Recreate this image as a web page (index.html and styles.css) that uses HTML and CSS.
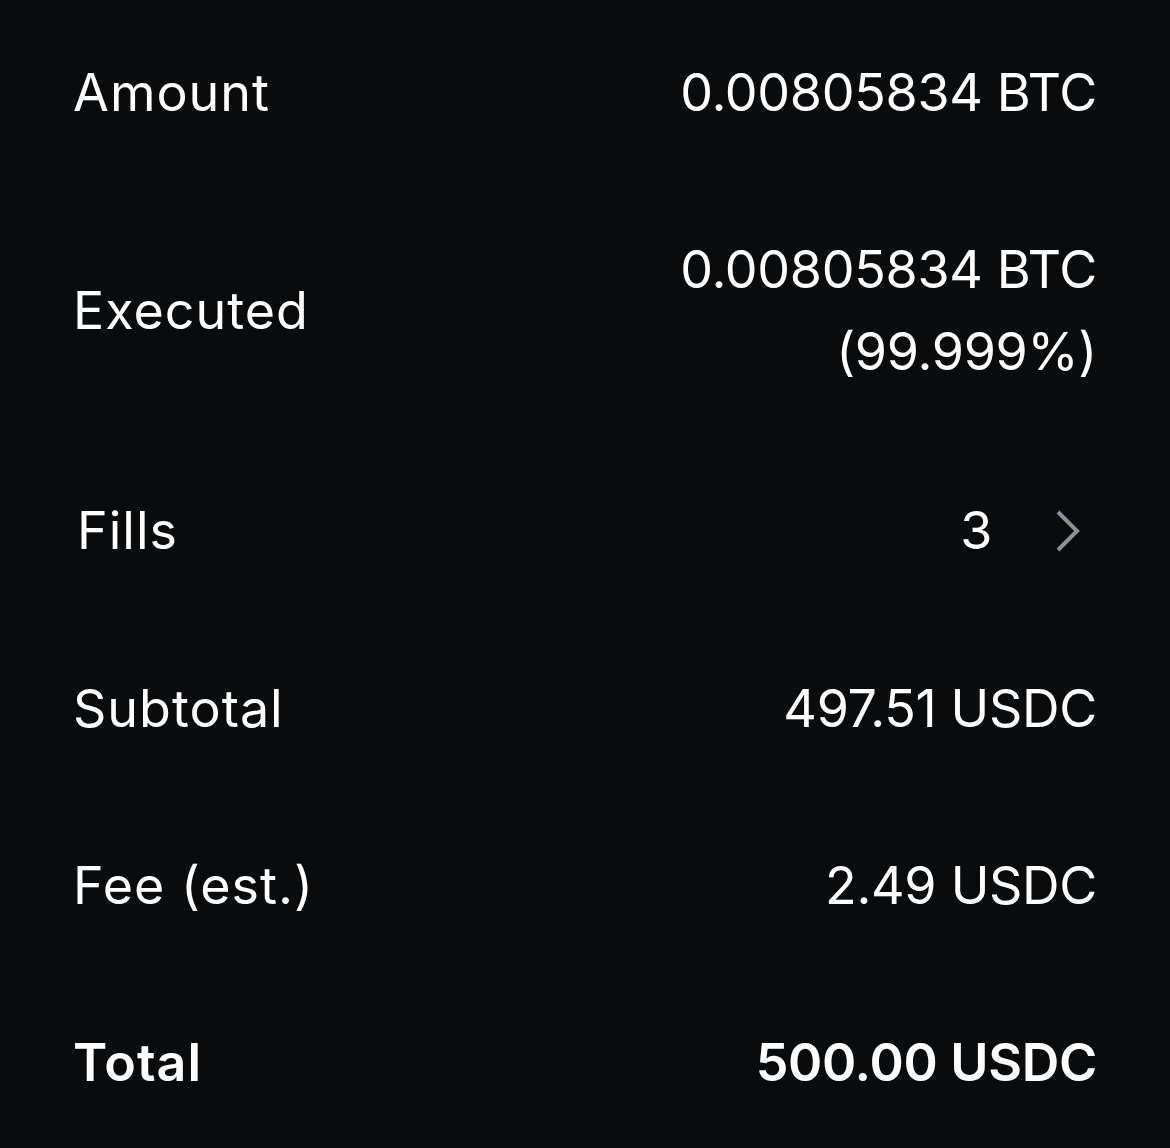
FILE: index.html
```html
<!DOCTYPE html>
<html lang="en">
<head>
  <meta charset="UTF-8" />
  <meta name="viewport" content="width=device-width, initial-scale=1" />
  <title>Order details</title>
  <link rel="stylesheet" href="styles.css">
</head>
<body>
  <div class="details">
    <div class="row">
      <span class="label">Amount</span>
      <span class="value">0.00805834 BTC</span>
    </div>

    <div class="row">
      <span class="label">Executed</span>
      <span class="value">0.00805834 BTC<br>(99.999%)</span>
    </div>

    <div class="row fills">
      <span class="label">Fills</span>
      <span class="value">
        3
        <svg class="chevron" width="26" height="44" viewBox="0 0 26 44">
          <path d="M3 3 L22 22 L3 41" fill="none" stroke="#8a8f9a" stroke-width="4" />
        </svg>
      </span>
    </div>

    <div class="row">
      <span class="label">Subtotal</span>
      <span class="value">497.51 USDC</span>
    </div>

    <div class="row">
      <span class="label">Fee (est.)</span>
      <span class="value">2.49 USDC</span>
    </div>

    <div class="row total">
      <span class="label">Total</span>
      <span class="value">500.00 USDC</span>
    </div>
  </div>
</body>
</html>
```

FILE: styles.css
```css
body {
  margin: 0;
  background: #0a0b0d;
  color: #fff;
  font-family: Inter, 'Noto Sans', sans-serif;
}
.details {
  padding: 5px 73px 0;
}
.row {
  display: flex;
  justify-content: space-between;
  align-items: center;
  padding: 47px 0 48px;
  font-size: 52px;
  line-height: 82px;
}
.label {
  letter-spacing: 1px;
}
.value {
  text-align: right;
  display: flex;
  align-items: center;
  letter-spacing: -0.3px;
}
.fills {
  padding: 49px 16px 49px 4px;
}
.chevron {
  margin-left: 63px;
}
.total {
  font-weight: 600;
}
```
